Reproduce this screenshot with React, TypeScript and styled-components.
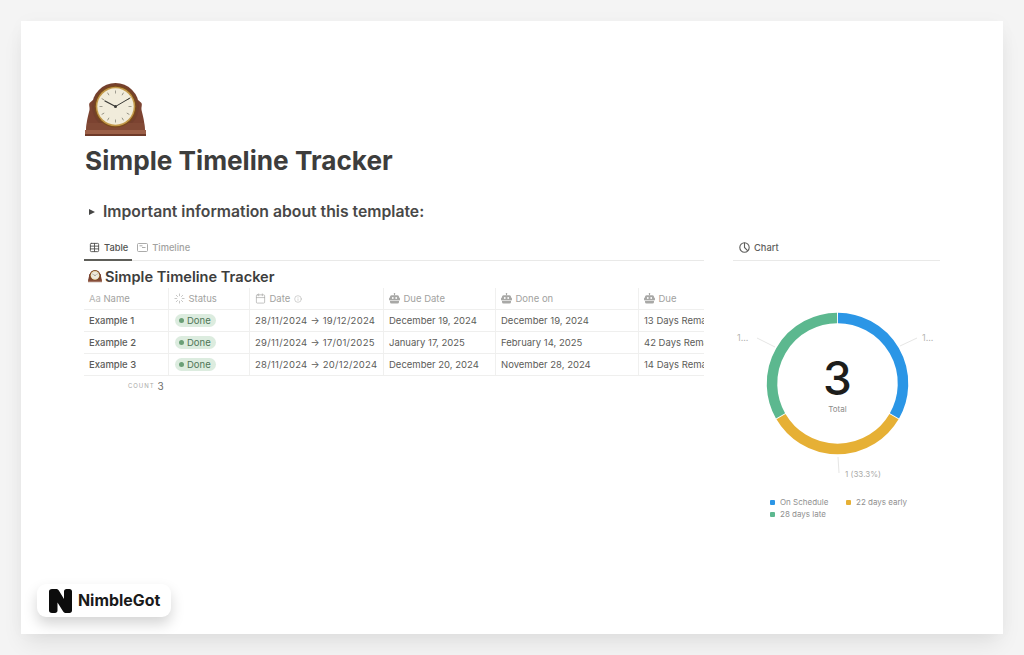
import React from 'react';
import styled, { createGlobalStyle } from 'styled-components';
import { Calendar, Info, Loader, Table } from 'lucide-react';

const GlobalStyle = createGlobalStyle`
  html, body {
    margin: 0;
    padding: 0;
    background: #f4f4f4;
  }
  body {
    font-family: Inter, "Liberation Sans", sans-serif;
    color: #3b3b3a;
  }
`;

const Page = styled.div`
  position: relative;
  box-sizing: border-box;
  width: 1024px;
  height: 655px;
  padding: 21px;
  overflow: hidden;
`;

const Card = styled.main`
  box-sizing: border-box;
  width: 982px;
  height: 613px;
  padding: 62px 63px 0;
  background: #fff;
  box-shadow: 0 12px 22px -4px rgba(0, 0, 0, 0.09), 0 0 18px rgba(0, 0, 0, 0.025);
`;

const PageIcon = styled.div`
  margin-left: 1px;
  height: 53px;
`;

const Title = styled.h1`
  margin: 8px 0 0 1px;
  font-size: 26.2px;
  line-height: 34px;
  font-weight: 700;
  color: #3d3d3c;
`;

const Toggle = styled.div`
  display: flex;
  align-items: center;
  gap: 8px;
  margin: 23px 0 0 5px;
  font-size: 15.75px;
  line-height: 22px;
  font-weight: 600;
  color: #484847;
`;

const Caret = styled.span`
  width: 0;
  height: 0;
  border-left: 6px solid #454544;
  border-top: 3.5px solid transparent;
  border-bottom: 3.5px solid transparent;
`;

const Columns = styled.div`
  display: flex;
  gap: 29px;
  margin-top: 13px;
`;

const LeftColumn = styled.section`
  width: 620px;
  overflow: hidden;
`;

const RightColumn = styled.section`
  width: 207px;
`;

const Tabs = styled.nav`
  display: flex;
  height: 24px;
  border-bottom: 1px solid #e9e9e8;
`;

const Tab = styled.div<{ $active?: boolean }>`
  display: flex;
  align-items: center;
  gap: 4px;
  box-sizing: border-box;
  height: 25px;
  padding: 0 4px 0 5px;
  font-size: 9.3px;
  font-weight: 500;
  color: ${({ $active }) => ($active ? '#525250' : '#a2a2a0')};
  border-bottom: ${({ $active }) => ($active ? '2px solid #5e5e59' : '2px solid transparent')};
  svg {
    flex: none;
  }
`;

const ChartTab = styled(Tab)`
  padding-left: 6px;
  color: #5e5e5c;
`;

const TableTitle = styled.h2`
  display: flex;
  align-items: center;
  gap: 3px;
  box-sizing: border-box;
  height: 27px;
  padding-top: 4px;
  margin: 0 0 0 4px;
  font-size: 14.6px;
  font-weight: 600;
  color: #3d3d3c;
`;

const Row = styled.div`
  display: grid;
  grid-template-columns: 85px 81px 134px 112px 143px 140px;
  width: 695px;
  height: 22px;
  box-sizing: border-box;
  border-bottom: 1px solid #efefee;
`;

const Cell = styled.div<{ $head?: boolean; $bold?: boolean; $spaced?: boolean }>`
  display: flex;
  align-items: center;
  gap: ${({ $head }) => ($head ? '3.5px' : '4px')};
  box-sizing: border-box;
  padding-left: 5px;
  white-space: nowrap;
  overflow: hidden;
  font-size: 9.5px;
  font-weight: ${({ $bold }) => ($bold ? 500 : 400)};
  letter-spacing: ${({ $spaced }) => ($spaced ? '0.27px' : 'normal')};
  color: ${({ $head }) => ($head ? '#a2a2a0' : '#5c5c59')};
  border-right: 1px solid #f0f0ef;
  svg {
    flex: none;
    color: #a8a8a6;
  }
`;

const TypeLabel = styled.span`
  margin-right: -1px;
  font-size: 9.5px;
  color: #b5b5b3;
`;

const Pill = styled.span`
  display: inline-flex;
  align-items: center;
  gap: 3px;
  height: 13px;
  margin-left: 1px;
  padding: 0 5px 0 4px;
  border-radius: 7px;
  background: #dcecdf;
  color: #4f7657;
  font-size: 9.5px;
`;

const Dot = styled.span`
  width: 5px;
  height: 5px;
  border-radius: 50%;
  background: #6a9f77;
`;

const CountRow = styled.div`
  display: flex;
  align-items: center;
  gap: 3px;
  height: 19px;
  margin-left: 44px;
  color: #6f6f6c;
  font-size: 10px;
`;

const CountLabel = styled.span`
  font-size: 6px;
  letter-spacing: 0.95px;
  color: #a8a8a6;
`;

const ChartFigure = styled.svg`
  display: block;
  margin-top: 1px;
`;

const Legend = styled.div`
  display: grid;
  grid-template-columns: 76px auto;
  padding-left: 37px;
`;

const LegendItem = styled.div`
  display: flex;
  align-items: center;
  gap: 5px;
  height: 12px;
  font-size: 8px;
  color: #909090;
`;

const Swatch = styled.span<{ $color: string }>`
  width: 5px;
  height: 5px;
  border-radius: 1px;
  background: ${({ $color }) => $color};
`;

const Brand = styled.div`
  position: absolute;
  left: 37px;
  top: 584px;
  display: flex;
  align-items: center;
  gap: 6px;
  box-sizing: border-box;
  width: 134px;
  height: 33px;
  padding-left: 12px;
  border-radius: 9px;
  background: #fff;
  box-shadow: 0 7px 14px rgba(0, 0, 0, 0.17);
  font-size: 15.9px;
  font-weight: 700;
  color: #1a1a1a;
`;

function ClockIcon({ size = 61 }: { size?: number }) {
  return (
    <svg width={size} height={(size * 53) / 61} viewBox="0 0 61 53">
      <path
        d="M1 48 C1.500 38 3 33 4.500 27 C5 24 3.500 22 4.500 20 L8 17 L53 17 L56.500 20 C57.500 22 56 24 56.500 27 C58 33 59.500 38 60 48 Z"
        fill="#7c4331"
      />
      <circle cx="30.500" cy="23.500" r="23.500" fill="#74402d" />
      <path d="M2 40 H59 L60 48 H1 Z" fill="#824a36" />
      <rect x="0" y="47" width="61" height="4" fill="#9c6048" />
      <rect x="0" y="51" width="61" height="2" fill="#6e3a29" />
      <circle cx="30.500" cy="23.500" r="21" fill="#7a4a1c" />
      <circle cx="30.500" cy="23.500" r="19.700" fill="#c39a4a" />
      <circle cx="30.500" cy="23.500" r="18.200" fill="#f1ecdb" />
      {Array.from({ length: 12 }, (_, i) => (
        <line
          key={i}
          x1="30.500"
          y1="7.500"
          x2="30.500"
          y2="10.500"
          stroke="#8a887c"
          strokeWidth="0.800"
          transform={`rotate(${i * 30} 30.500 23.500)`}
        />
      ))}
      <line x1="30.500" y1="23.500" x2="20" y2="18" stroke="#3a3a36" strokeWidth="1.300" strokeLinecap="round" />
      <line x1="30.500" y1="23.500" x2="45" y2="15" stroke="#3a3a36" strokeWidth="1" strokeLinecap="round" />
      <circle cx="30.500" cy="23.500" r="1.500" fill="#3a3a36" />
    </svg>
  );
}

function TimelineIcon() {
  return (
    <svg width="11" height="11" viewBox="0 0 11 11" fill="none" stroke="#a2a2a0" strokeWidth="0.900">
      <rect x="0.500" y="1.500" width="10" height="8" rx="1" />
      <path d="M2.500 3.800 H5.500 M5 5.500 H8.500" />
    </svg>
  );
}

function ChartIcon() {
  return (
    <svg width="11" height="11" viewBox="0 0 11 11" fill="none" stroke="#5e5e5c" strokeWidth="1.100">
      <circle cx="5.500" cy="5.500" r="4.700" />
      <path d="M5.500 0.800 V5.500 L8.800 8.800" />
    </svg>
  );
}

function BotIcon() {
  return (
    <svg width="11" height="11" viewBox="0 0 11 11" fill="#a8a8a6">
      <rect x="5" y="0.300" width="1" height="2" />
      <circle cx="5.500" cy="0.800" r="0.800" />
      <path d="M2.500 2.200 H8.500 A1.500 1.500 0 0 1 10 3.700 V9 A1.500 1.500 0 0 1 8.500 10.500 H2.500 A1.500 1.500 0 0 1 1 9 V3.700 A1.500 1.500 0 0 1 2.500 2.200 Z" />
      <rect x="0" y="4.500" width="11" height="3" rx="1" />
      <circle cx="3.800" cy="5" r="0.900" fill="#fff" />
      <circle cx="7.200" cy="5" r="0.900" fill="#fff" />
      <rect x="1" y="7.300" width="9" height="0.600" fill="#fff" />
    </svg>
  );
}

function NimbleLogo() {
  return (
    <svg width="23" height="24" viewBox="0 0 23 24">
      <path
        d="M3 0 H7 C8.500 0 9.300 0.600 10 1.800 L15 10 V2.500 C15 1 16 0 17.500 0 H20.500 C22 0 23 1 23 2.500 V21.500 C23 23 22 24 20.500 24 H17 C15.500 24 14.700 23.400 14 22.200 L8.500 13.500 V21.500 C8.500 23 7.500 24 6 24 H3 C1 24 0 23 0 21.500 V2.500 C0 1 1 0 3 0 Z"
        fill="#0c0c0c"
      />
    </svg>
  );
}

const segments = [
  { from: 0.4, to: 119.6, color: '#2b96e6' },
  { from: 120.4, to: 239.6, color: '#e6b035' },
  { from: 240.4, to: 359.6, color: '#5cb88f' },
];

function arc(cx: number, cy: number, r: number, from: number, to: number) {
  const point = (deg: number) => {
    const rad = ((deg - 90) * Math.PI) / 180;
    return `${cx + r * Math.cos(rad)} ${cy + r * Math.sin(rad)}`;
  };
  return `M ${point(from)} A ${r} ${r} 0 0 1 ${point(to)}`;
}

const rows = [
  ['Example 1', '28/11/2024 → 19/12/2024', 'December 19, 2024', 'December 19, 2024', '13 Days Remaining'],
  ['Example 2', '29/11/2024 → 17/01/2025', 'January 17, 2025', 'February 14, 2025', '42 Days Remaining'],
  ['Example 3', '28/11/2024 → 20/12/2024', 'December 20, 2024', 'November 28, 2024', '14 Days Remaining'],
];

const legend = [
  { label: 'On Schedule', color: '#2b96e6' },
  { label: '22 days early', color: '#e6b035' },
  { label: '28 days late', color: '#5cb88f' },
];

export default function App() {
  return (
    <Page>
      <GlobalStyle />
      <Card>
        <PageIcon>
          <ClockIcon />
        </PageIcon>
        <Title>Simple Timeline Tracker</Title>
        <Toggle>
          <Caret />
          Important information about this template:
        </Toggle>
        <Columns>
          <LeftColumn>
            <Tabs>
              <Tab $active>
                <Table size={11} />
                Table
              </Tab>
              <Tab>
                <TimelineIcon />
                Timeline
              </Tab>
            </Tabs>
            <TableTitle>
              <ClockIcon size={14} />
              Simple Timeline Tracker
            </TableTitle>
            <Row>
              <Cell $head>
                <TypeLabel>Aa</TypeLabel>
                Name
              </Cell>
              <Cell $head>
                <Loader size={11} strokeWidth={1.4} />
                Status
              </Cell>
              <Cell $head>
                <Calendar size={11} strokeWidth={1.5} />
                Date
                <Info size={8} strokeWidth={1.5} />
              </Cell>
              <Cell $head>
                <BotIcon />
                Due Date
              </Cell>
              <Cell $head>
                <BotIcon />
                Done on
              </Cell>
              <Cell $head>
                <BotIcon />
                Due
              </Cell>
            </Row>
            {rows.map(row => (
              <Row key={row[0]}>
                <Cell $bold>{row[0]}</Cell>
                <Cell>
                  <Pill>
                    <Dot />
                    Done
                  </Pill>
                </Cell>
                <Cell $spaced>{row[1]}</Cell>
                <Cell>{row[2]}</Cell>
                <Cell>{row[3]}</Cell>
                <Cell>{row[4]}</Cell>
              </Row>
            ))}
            <CountRow>
              <CountLabel>COUNT</CountLabel>
              3
            </CountRow>
          </LeftColumn>
          <RightColumn>
            <Tabs>
              <ChartTab>
                <ChartIcon />
                Chart
              </ChartTab>
            </Tabs>
            <ChartFigure width="207" height="234" viewBox="0 0 207 234">
              {segments.map(s => (
                <path
                  key={s.color}
                  d={arc(104.5, 121.5, 65.5, s.from, s.to)}
                  fill="none"
                  stroke={s.color}
                  strokeWidth="10.500"
                />
              ))}
              <path d="M167 84 L184 76 M24 76 L42 85 M105 195 L106 211" fill="none" stroke="#e6e6e5" strokeWidth="1" />
              <text x="189" y="79" fontSize="9" fill="#b5b5b3">1...</text>
              <text x="4" y="79" fontSize="9" fill="#b5b5b3">1...</text>
              <text x="112" y="215" fontSize="8" fill="#a9a9a7">1 (33.3%)</text>
              <text x="104.500" y="133" fontSize="46" fontWeight="450" textAnchor="middle" fill="#1d1d1b">3</text>
              <text x="104.500" y="150" fontSize="8" textAnchor="middle" fill="#8c8c8a">Total</text>
            </ChartFigure>
            <Legend>
              {legend.map(item => (
                <LegendItem key={item.label}>
                  <Swatch $color={item.color} />
                  {item.label}
                </LegendItem>
              ))}
            </Legend>
          </RightColumn>
        </Columns>
      </Card>
      <Brand>
        <NimbleLogo />
        NimbleGot
      </Brand>
    </Page>
  );
}
